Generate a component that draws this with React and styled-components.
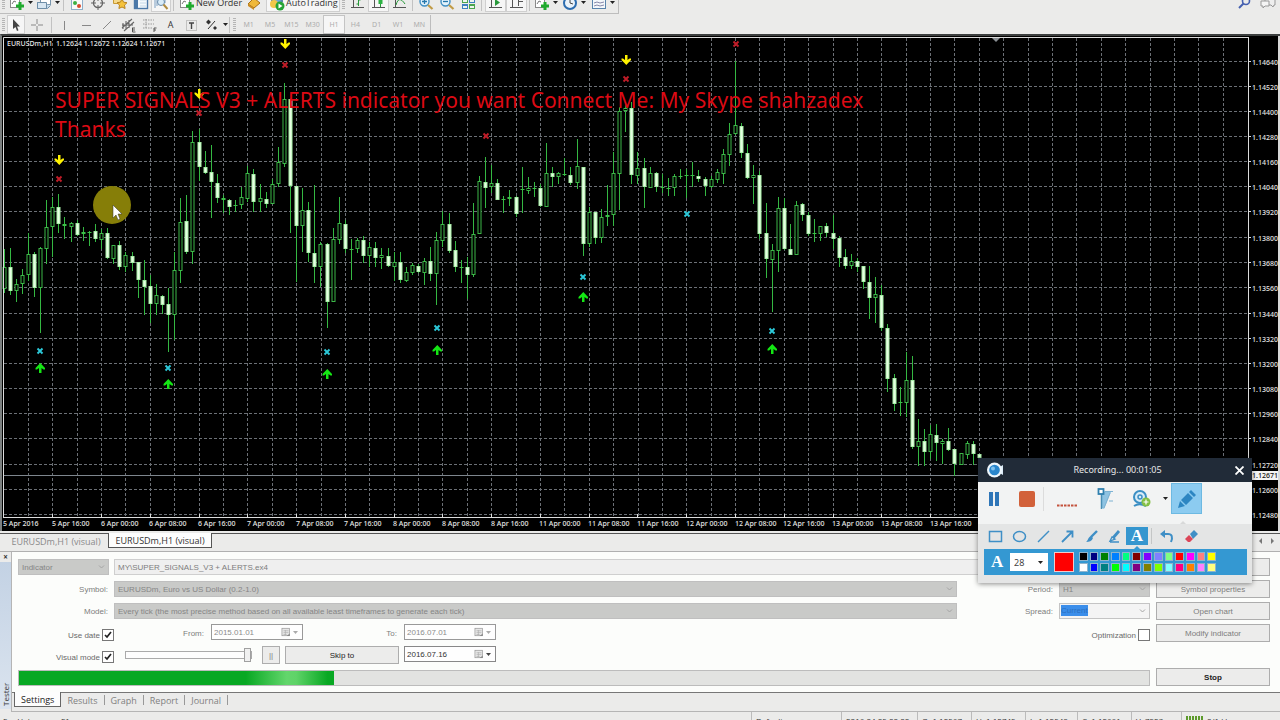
import React from 'react'
import styled, { createGlobalStyle } from 'styled-components'

const GlobalStyle = createGlobalStyle`
* {
    box-sizing: border-box;
}
body {
    margin: 0;
    overflow: hidden;
    background-color: #ebebea;
}
button, input, select {
    font: inherit;
    color: inherit;
    margin: 0;
    padding: 0;
    border-radius: 0;
}
`;

/* ---------- toolbars ---------- */

const Page = styled.div`
position: relative;
height: 100vh;
overflow: hidden;
display: flex;
flex-direction: column;
background-color: #ebebea;
font-family: 'Liberation Sans', sans-serif;
font-size: 8px;
color: #777;
`;
const ToolRow = styled.div`
display: flex;
align-items: center;
flex: none;
justify-content: space-between;
`;
const TopRow = styled(ToolRow)`
height: 22px;
margin-top: -8px;
`;
const LowerRow = styled(ToolRow)`
height: 20px;
padding-top: 1px;
`;
const Tools = styled.div`
display: flex;
align-items: center;
height: 100%;
border-right: 1px solid #bdbdbd;
border-bottom: ${p => (p.$line ? '1px solid #bdbdbd' : 'none')};
`;
const ToolButton = styled.button`
display: flex;
align-items: center;
justify-content: ${p => (p.$text ? 'flex-start' : 'center')};
gap: ${p => (p.$text ? 1 : 3)}px;
flex: none;
width: ${p => p.$w || 21}px;
height: 19px;
padding-left: ${p => (p.$text ? 2 : 0)}px;
border: 1px solid ${p => (p.$on ? '#cfcfcf' : 'transparent')};
background-color: ${p => (p.$on ? '#f6f6f6' : 'transparent')};
font-family: 'Open Sans', sans-serif;
font-size: 9px;
color: #333;
white-space: nowrap;
svg {
    flex: none;
}
`;
const Grip = styled.span`
flex: none;
width: 3px;
height: 14px;
margin: 0 2px;
background: repeating-linear-gradient(#b5b5b5 0 1px, transparent 1px 2px);
`;
const Separator = styled.span`
flex: none;
width: 1px;
height: 16px;
margin: 0 ${p => p.$m || 2}px;
background-color: #c2c2c2;
`;
const Periods = styled.div`
display: grid;
grid-template-columns: repeat(9, 1fr);
width: 192px;
height: 19px;
`;
const Period = styled.button`
border: 1px solid ${p => (p.$on ? '#c4c4c4' : 'transparent')};
background-color: ${p => (p.$on ? '#f6f6f6' : 'transparent')};
font-family: 'Noto Sans', sans-serif;
font-size: 7px;
color: #adadad;
`;
const RightTools = styled.div`
display: flex;
gap: 8px;
padding-right: 4px;
`;

/* ---------- chart ---------- */

const ChartFrame = styled.div`
position: relative;
display: flex;
flex: none;
height: 497px;
margin-bottom: 2px;
border-top: 2px solid #3c3f3f;
border-left: 2px solid #7c8080;
background-color: #000;
`;
const Plot = styled.svg`
flex: 1;
min-width: 0;
height: 495px;
overflow: hidden;
`;
const PriceScale = styled.svg`
flex: none;
width: 32px;
height: 495px;
border-right: 2px solid #d8d8d8;
`;
const AxisText = styled.text`
font-family: 'Noto Sans', sans-serif;
font-size: 7px;
font-weight: 500;
fill: ${p => (p.$dark ? '#111' : '#e6e6e6')};
`;
const Annotation = styled.p`
position: absolute;
left: 53px;
top: 50px;
margin: 0;
font-family: 'Noto Sans', sans-serif;
font-size: 21px;
line-height: 29px;
white-space: nowrap;
color: #dc0a14;
`;
const Pointer = styled.svg`
position: absolute;
left: 90px;
top: 149px;
`;

/* ---------- chart tabs ---------- */

const ChartTabs = styled.div`
display: flex;
justify-content: space-between;
flex: none;
height: 19px;
border-top: 1px solid #555;
border-bottom: 1px solid #b0b0b0;
font-family: 'Open Sans', sans-serif;
font-size: 9px;
`;
const TabGroup = styled.div`
display: flex;
align-items: flex-start;
padding-left: 4px;
`;
const ChartTab = styled.button`
height: 15px;
margin-top: -1px;
width: 104px;
border: ${p => (p.$on ? '1px solid #555' : 'none')};
border-top: ${p => (p.$on ? 'none' : '1px solid #555')};
background-color: ${p => (p.$on ? '#fdfdfd' : 'transparent')};
color: ${p => (p.$on ? '#333' : '#8a8a8a')};
`;
const TabArrows = styled.div`
display: flex;
gap: 9px;
padding: 4px 5px 0 0;
`;

/* ---------- tester ---------- */

const Tester = styled.section`
display: flex;
flex: none;
height: 160px;
`;
const SideBar = styled.div`
display: flex;
flex-direction: column;
align-items: center;
width: 12px;
border-right: 1px solid #b5b5b5;
font-family: 'Open Sans', sans-serif;
font-size: 8px;
color: #333;
`;
const CloseSmall = styled.button`
border: none;
background: none;
height: 10px;
line-height: 8px;
font-weight: bold;
`;
const SideTitle = styled.div`
flex: 1;
width: 11px;
line-height: 11px;
writing-mode: vertical-rl;
transform: rotate(180deg);
margin-bottom: 3px;
padding-top: 3px;
background: linear-gradient(#dbe4ef, #c3d2e4);
`;
const TesterBody = styled.div`
flex: 1;
min-width: 0;
`;
const Settings = styled.form`
display: grid;
grid-template-columns: 1fr 114px;
grid-auto-rows: 18px;
gap: 4px 6px;
height: 140px;
padding: 6px 10px 0 6px;
background-color: #fcfdfb;
`;
const Row = styled.div`
display: flex;
align-items: center;
min-width: 0;
`;
const Gap = styled.span`
flex: none;
width: 5px;
`;
const Label = styled.label`
flex: none;
width: ${p => p.$w || 90}px;
margin-right: 6px;
text-align: right;
white-space: nowrap;
color: #7d7d7d;
`;
const SelectBox = styled.div`
position: relative;
flex: ${p => (p.$w ? 'none' : '1')};
width: ${p => (p.$w ? p.$w + 'px' : 'auto')};
height: 16px;
svg {
    position: absolute;
    right: 4px;
    top: 5px;
}
`;
const Select = styled.select`
appearance: none;
width: 100%;
height: 16px;
padding-left: 3px;
border: 1px solid ${p => (p.$light ? '#c4c4c4' : '#bfbfbf')};
background-color: ${p => (p.$light ? '#f4f4f4' : '#c9cac8')};
color: #858585;
opacity: 1;
`;
const Selection = styled.span`
position: absolute;
left: 2px;
top: 2px;
width: 27px;
line-height: 11px;
background-color: #3b8eea;
color: #2a6fc0;
`;
const TextBox = styled.input`
flex: 1;
height: 16px;
padding-left: 3px;
border: 1px solid #cfcfcf;
background-color: #efefef;
color: #7d7d7d;
`;
const Side = styled.div`
display: flex;
align-items: center;
justify-content: flex-end;
flex: none;
width: 193px;
margin-left: ${p => (p.$push ? 'auto' : '0')};
`;
const CheckBox = styled.input`
appearance: none;
flex: none;
width: 12px;
height: 12px;
margin-top: 3px;
border: 1px solid #777;
background-color: #fff;
&:checked {
    background-image: url("data:image/svg+xml,%3Csvg xmlns='http://www.w3.org/2000/svg' viewBox='0 0 10 10'%3E%3Cpath d='M2 5l2 2 4-5' fill='none' stroke='%23222' stroke-width='1.7'/%3E%3C/svg%3E");
}
`;
const CheckLabel = styled(Label)`
width: 82px;
margin-right: 2px;
padding-top: 4px;
color: #6a6a6a;
`;
const DateLabel = styled(Label)`
margin-right: 7px;
`;
const DateField = styled.div`
display: flex;
align-items: center;
gap: 2px;
width: 92px;
height: 16px;
margin-bottom: 2px;
padding: 0 4px 0 2px;
border: 1px solid ${p => (p.$on ? '#888' : '#999')};
background-color: #fefefe;
color: ${p => (p.$on ? '#333' : '#8c8c8c')};
input {
    flex: 1;
    min-width: 0;
    border: none;
    background: none;
}
`;
const Slider = styled.input`
appearance: none;
width: 127px;
height: 16px;
margin: 0 10px 0 11px;
background: none;
&::-webkit-slider-runnable-track {
    height: 8px;
    border: 1px solid #aaa;
    background-color: #fdfdfd;
}
&::-webkit-slider-thumb {
    appearance: none;
    width: 7px;
    height: 14px;
    margin-top: -4px;
    border: 1px solid #a0a0a0;
    background-color: #f0f0f0;
}
`;
const Button = styled.button`
width: ${p => (p.$w ? p.$w + 'px' : 'auto')};
height: 18px;
border: 1px solid #adadad;
background-color: #ececeb;
font-weight: ${p => (p.$bold ? 'bold' : 'normal')};
color: ${p => (p.$on ? '#222' : '#7d7d7d')};
`;
const ProgressTrack = styled.div`
flex: 1;
height: 16px;
margin-top: 1px;
border: 1px solid #bcbcbc;
background-color: #e2e3e1;
`;
const ProgressFill = styled.div`
height: 14px;
background: linear-gradient(90deg, #08a823 0 72%, #63d66c 85%, #5fd368 88%, #08a823 98%);
`;
const TesterTabs = styled.div`
display: flex;
align-items: flex-start;
height: 20px;
padding-left: 2px;
border-top: 1px solid #777;
border-bottom: 1px solid #b5b5b5;
`;
const TesterTab = styled.button`
height: 15px;
margin-top: -1px;
padding: 0 6px;
border: ${p => (p.$on ? '1px solid #666' : 'none')};
border-top: ${p => (p.$on ? 'none' : '1px solid #777')};
background-color: ${p => (p.$on ? '#fdfdfd' : 'transparent')};
font-family: 'Open Sans', sans-serif;
font-size: 9px;
color: ${p => (p.$on ? '#222' : '#808080')};
`;
const TabLine = styled.span`
width: 1px;
height: 10px;
margin-top: 2px;
background-color: #999;
`;

/* ---------- status bar ---------- */

const StatusBar = styled.footer`
display: flex;
flex: none;
height: 20px;
font-family: 'Open Sans', sans-serif;
font-size: 8px;
line-height: 18px;
color: #333;
`;
const StatusCell = styled.span`
display: flex;
align-items: center;
gap: 4px;
width: ${p => p.$w}px;
height: 18px;
padding-left: 4px;
white-space: nowrap;
border-left: 1px solid #bbb;
`;
const StatusMain = styled.span`
flex: 1;
padding-left: 3px;
`;

/* ---------- recorder window ---------- */

const Recorder = styled.div`
position: absolute;
right: 28px;
top: 458px;
width: 274px;
padding-bottom: 8px;
background-color: #e4e5e5;
box-shadow: 0 1px 5px rgba(0, 0, 0, 0.45);
`;
const RecorderTitle = styled.div`
display: grid;
grid-template-columns: 20px 1fr 20px;
align-items: center;
height: 24px;
padding: 0 3px 0 8px;
background-color: #212b38;
font-family: 'Noto Sans', sans-serif;
font-size: 9px;
line-height: 22px;
color: #e8e8e8;
text-align: center;
`;
const CloseButton = styled.button`
display: flex;
justify-content: center;
border: none;
background: none;
`;
const RecorderMain = styled.div`
display: flex;
align-items: flex-start;
height: 42px;
padding-top: 1px;
background-color: #f2f3f3;
`;
const RecButton = styled.button`
display: flex;
align-items: center;
justify-content: center;
flex: none;
width: ${p => p.$w}px;
height: 31px;
border: ${p => (p.$on ? '1px solid #6db9e2' : 'none')};
background-color: ${p => (p.$on ? '#8ccbf0' : 'transparent')};
`;
const RecSplit = styled.span`
width: 1px;
height: 24px;
margin-top: 4px;
background-color: #dcdcdc;
`;
const RecSplitShort = styled.span`
width: 1px;
height: 16px;
margin: 0 1px 0 2px;
background-color: #c4c6c6;
`;
const RecorderTools = styled.div`
position: relative;
display: flex;
align-items: center;
height: 25px;
padding: 0 0 1px 6px;
`;
const DrawTool = styled.button`
display: flex;
align-items: center;
justify-content: center;
width: ${p => p.$w || 23}px;
height: 18px;
margin-right: 1px;
border: none;
background-color: ${p => (p.$on ? '#3596cf' : 'transparent')};
font-family: 'Liberation Serif', serif;
font-size: 17px;
line-height: 18px;
font-weight: bold;
color: #fff;
`;
const Notch = styled.span`
position: absolute;
left: ${p => p.$x}px;
bottom: ${p => p.$y || 0}px;
border: 3px solid transparent;
border-top: none;
border-bottom-color: ${p => p.$c};
`;
const TextBar = styled.div`
display: flex;
align-items: center;
height: 26px;
margin: 0 5px 0 6px;
padding-left: 7px;
background-color: #3498d2;
`;
const BigA = styled.span`
width: 19px;
font-family: 'Liberation Serif', serif;
font-size: 17px;
font-weight: bold;
color: #fff;
`;
const SizeBox = styled.div`
display: flex;
align-items: center;
width: 38px;
height: 18px;
padding: 0 3px 0 4px;
background-color: #fff;
color: #444;
input {
    width: 24px;
    border: none;
    font-family: 'Noto Sans', sans-serif;
    font-size: 9px;
}
`;
const CurrentColor = styled.span`
width: 20px;
height: 20px;
margin: 0 5px 0 6px;
border: 1px solid #f3c9c9;
background-color: #ff0000;
`;
const Palette = styled.div`
display: grid;
grid-template-columns: repeat(13, 1fr);
grid-auto-rows: 9px;
gap: 2px;
width: 137px;
`;
const Swatch = styled.button`
border: 1px solid #8fb4cc;
background-color: ${p => p.$c};
`;

/* high, body top, body bottom, low, 1 for a falling bar */
const CANDLES = [
  [249,267,289,293,0],[248,267,291,295,1],[279,284,291,302,0],[269,275,284,294,0],
  [233,254,275,281,0],[252,254,288,297,1],[247,248,288,333,0],[200,227,249,264,0],
  [197,207,227,257,0],[194,207,224,233,1],[217,224,226,239,1],[222,223,227,242,0],
  [220,223,235,236,1],[227,232,234,241,0],[231,232,232,246,0],[224,231,239,242,1],
  [229,233,240,249,0],[228,233,258,259,1],[245,245,259,264,0],[241,245,267,270,1],
  [252,255,267,272,0],[252,256,263,271,1],[262,262,280,298,1],[260,280,287,315,1],
  [275,286,304,323,1],[284,295,304,315,0],[295,296,305,314,1],[288,304,315,352,1],
  [252,270,315,340,0],[198,222,271,283,0],[195,221,252,254,1],[131,142,252,264,0],
  [129,142,167,181,1],[151,167,173,174,1],[145,172,182,218,1],[174,183,198,203,1],
  [195,198,200,213,1],[199,200,207,215,1],[200,205,206,212,0],[187,197,205,209,0],
  [166,173,199,202,0],[169,174,202,212,1],[184,198,202,212,0],[192,199,204,208,1],
  [179,184,204,204,0],[147,162,184,187,0],[83,99,164,167,0],[98,99,186,233,1],
  [186,186,226,282,1],[188,210,226,252,0],[202,210,253,262,1],[185,253,267,283,1],
  [242,244,267,287,0],[243,244,302,328,1],[228,239,302,302,0],[197,223,240,244,0],
  [220,224,249,253,1],[239,249,249,280,0],[238,240,249,253,0],[236,240,256,263,1],
  [242,247,256,267,0],[242,248,258,267,1],[248,255,258,269,0],[248,256,266,267,1],
  [252,262,267,281,0],[252,262,280,283,1],[267,272,281,282,0],[263,265,273,275,0],
  [264,266,272,273,1],[258,261,273,285,0],[247,261,274,281,1],[232,240,274,305,0],
  [211,224,241,247,0],[213,224,251,253,1],[241,250,267,272,1],[260,267,268,283,0],
  [257,267,275,299,1],[203,234,275,277,0],[176,181,234,234,0],[157,182,188,208,1],
  [165,183,187,193,0],[179,183,200,200,1],[196,199,199,213,0],[190,197,199,206,0],
  [196,197,214,217,1],[167,189,189,213,0],[177,188,191,194,0],[182,188,188,197,0],
  [184,188,206,207,1],[143,173,207,207,0],[167,173,177,187,1],[172,173,177,184,0],
  [158,174,175,176,1],[167,175,183,185,1],[139,166,183,189,0],[167,167,244,256,1],
  [207,212,244,247,0],[212,212,238,244,1],[209,217,238,243,0],[185,215,217,226,0],
  [152,173,215,226,0],[107,111,174,210,0],[102,108,111,132,0],[102,108,175,184,1],
  [152,168,176,184,0],[158,168,187,208,1],[167,173,188,188,0],[172,173,187,192,1],
  [174,187,187,193,0],[178,188,188,196,0],[174,176,188,196,0],[169,176,177,179,0],
  [169,175,176,198,0],[162,175,176,187,0],[170,176,179,182,1],[177,179,186,196,1],
  [176,179,187,188,0],[169,172,180,183,0],[149,154,174,184,0],[123,134,155,166,0],
  [61,125,134,135,0],[123,126,153,158,1],[144,153,178,179,1],[165,175,178,204,0],
  [171,175,234,239,1],[203,233,259,278,1],[244,250,260,312,0],[197,208,251,272,0],
  [198,208,249,250,1],[224,249,255,255,1],[201,205,255,255,0],[203,204,215,221,1],
  [212,215,234,236,1],[219,233,234,242,0],[226,226,234,241,0],[223,226,233,237,1],
  [215,233,239,249,1],[236,238,258,267,1],[249,257,266,269,1],[254,261,266,269,0],
  [258,261,267,272,1],[266,266,282,289,1],[266,282,298,319,1],[277,294,298,323,0],
  [285,295,328,331,1],[324,328,379,392,1],[374,378,404,411,1],[387,402,403,416,0],
  [352,380,403,417,0],[356,380,447,449,1],[419,441,447,466,0],[429,441,452,466,1],
  [425,434,452,459,0],[424,435,443,461,1],[439,441,444,464,0],[428,441,450,451,1],
  [449,449,464,476,1],[453,453,465,465,0],[441,443,455,459,0],[441,444,454,465,1],
  [454,454,458,470,1],
];

const MARKS = {
  sell: [[59,160],[199,94],[285,44],[626,60]],
  buy: [[40,368],[168,384],[327,374],[437,350],[583,297],[772,349]],
  top: [[59,179],[199,113],[285,65],[486,136],[626,79],[736,44]],
  bottom: [[40,351],[168,368],[327,352],[437,328],[583,277],[687,214],[772,331]],
};

const GRID_Y = [62, 87, 112, 137, 162, 187, 212, 238, 263, 288, 314, 339, 364, 389, 414, 439, 465, 490, 515];
const TIMES = [
  '5 Apr 2016', '5 Apr 16:00', '6 Apr 00:00', '6 Apr 08:00', '6 Apr 16:00', '7 Apr 00:00', '7 Apr 08:00',
  '7 Apr 16:00', '8 Apr 00:00', '8 Apr 08:00', '8 Apr 16:00', '11 Apr 00:00', '11 Apr 08:00', '11 Apr 16:00',
  '12 Apr 00:00', '12 Apr 08:00', '12 Apr 16:00', '13 Apr 00:00', '13 Apr 08:00', '13 Apr 16:00',
];
const BAR_STEP = 6.096;
const barX = i => Math.floor(4 + i * BAR_STEP);

function Candle({ x, data }) {
  const [high, top, bottom, low, down] = data;
  const h = Math.max(bottom - top, 1);
  return (
    <g>
      <rect x={x} y={high} width="1" height={Math.max(low - high, 1)} fill="#34b842" />
      {h < 3
        ? <rect x={x - 1.5} y={top} width="4" height={h} fill="#3cc048" />
        : <rect x={x - 1} y={top + 0.5} width="3" height={h - 1} fill={down ? '#e6ffe2' : '#000'} stroke={down ? '#a8f0a8' : '#3cb848'} />}
    </g>
  );
}

function Arrow({ x, y, color, up }) {
  return (
    <path
      d="M-1 -5h2.500v5l2 -1.500h1.500v1.500L0.300 5L-4.500 0v-1.500h1.500l2 1.500z"
      fill={color}
      transform={`translate(${x} ${y}) ${up ? 'scale(1 -1)' : ''}`}
    />
  );
}

function Cross({ x, y, color }) {
  return <path d={`M${x - 2.5} ${y - 2.5}l5 5m0 -5l-5 5`} stroke={color} strokeWidth="1.9" fill="none" />;
}

function Chart() {
  return (
    <ChartFrame>
      <Plot>
        {/* drawn in page coordinates, the frame starts at 2,36 */}
        <g transform="translate(-2 -36)">
          <g stroke="#6c7076" strokeDasharray="3 2" shapeRendering="crispEdges">
            {Array.from({ length: 50 }, (_, i) => {
              const x = Math.floor(28.4 + i * BAR_STEP * 4) + 0.5;
              return <line key={i} x1={x} x2={x} y1="38" y2="517" />;
            })}
            {GRID_Y.map(y => <line key={y} x1="4" x2="110%" y1={y - 0.5} y2={y - 0.5} />)}
          </g>
          <line x1="4" x2="110%" y1="475.5" y2="475.5" stroke="#7e868e" />
          {CANDLES.map((c, i) => <Candle key={i} x={barX(i)} data={c} />)}
          {MARKS.sell.map(([x, y]) => <Arrow key={x} x={x} y={y} color="#fff200" />)}
          {MARKS.buy.map(([x, y]) => <Arrow key={x} x={x} y={y} color="#14e614" up />)}
          {MARKS.top.map(([x, y]) => <Cross key={x} x={x} y={y} color="#c01c28" />)}
          {MARKS.bottom.map(([x, y]) => <Cross key={x} x={x} y={y} color="#2cc8d8" />)}
          <path d="M992 38h8l-4 4z" fill="#8a8f94" />
          <path d="M3.5 518V37.5H4000M3 517.5H4000" fill="none" stroke="#dcdcdc" />
          {TIMES.map((t, i) => (
            <g key={t}>
              {i > 0 && <rect x={Math.floor(4 + i * 8 * BAR_STEP)} y="514" width="1" height="4" fill="#ddd" />}
              <AxisText x={Math.round(3 + i * 8 * BAR_STEP)} y="526">{t}</AxisText>
            </g>
          ))}
          <AxisText x="7" y="46">EURUSDm,H1&#160; 1.12624 1.12672 1.12624 1.12671</AxisText>
        </g>
      </Plot>
      <PriceScale>
        <g transform="translate(0 -36)">
          <rect x="0" y="37" width="1" height="481" fill="#dcdcdc" />
          {GRID_Y.map((y, i) => (
            <g key={y}>
              <rect x="1" y={y - 1} width="2" height="1" fill="#ddd" />
              <AxisText x="4" y={y + 3}>{(1.1464 - i * 0.0012).toFixed(5)}</AxisText>
            </g>
          ))}
          <rect x="3" y="471" width="28" height="9" fill="#f4f4f4" />
          <AxisText x="4" y="478" $dark>1.12671</AxisText>
        </g>
      </PriceScale>
      <Annotation>
        SUPER SIGNALS V3 + ALERTS indicator you want Connect Me: My Skype shahzadex<br />Thanks
      </Annotation>
      <Pointer width="40" height="40" viewBox="0 0 40 40">
        <circle cx="20" cy="20" r="19" fill="#867e08" />
        <path d="M21 20v13l3-3 2 5 2-1-2-5h4z" fill="#fff" stroke="#333" strokeWidth="0.5" />
      </Pointer>
    </ChartFrame>
  );
}

/* ---------- icons ---------- */

const Svg = ({ children, s = 16 }) => (
  <svg width={s} height={s} viewBox="0 0 16 16" fill="none" aria-hidden="true">{children}</svg>
);
const Plus = ({ x = 10, y = 10 }) => (
  <path d={`M${x - 4} ${y}h8M${x} ${y - 4}v8`} stroke="#1faa2d" strokeWidth="3" />
);
const Caret = ({ c = '#222' }) => (
  <svg width="5" height="3" viewBox="0 0 5 3" aria-hidden="true"><path d="M0 0h5L2.5 3z" fill={c} /></svg>
);
const Chevron = () => (
  <svg width="7" height="6" viewBox="0 0 7 6" fill="none" aria-hidden="true"><path d="M1 1.5l2.5 2.5L6 1.5" stroke="#a5a5a5" /></svg>
);
const NewChart = () => <Svg><rect x="1.5" y="1.5" width="9" height="11" fill="#fff" stroke="#8a8a8a" /><path d="M3 9l2-3 2 1" stroke="#777" /><Plus x={11} y={11} /></Svg>;
const Profiles = () => <Svg><rect x="4.5" y="2.5" width="10" height="7" fill="#fff" stroke="#7a96ad" /><path d="M1.5 7v6.500h10l3-3" fill="#c5dcee" stroke="#6e8ea8" /><path d="M1.5 7.5h9v6h-9z" fill="#d7e6f2" stroke="#6e8ea8" /></Svg>;
const Market = () => <Svg><rect x="2.5" y="0.5" width="11" height="14" fill="#fafafa" stroke="#8fb0ca" /><circle cx="6" cy="8" r="2" fill="#3cb043" /><circle cx="10" cy="11" r="2" fill="#d9482b" /></Svg>;
const Target = () => <Svg><circle cx="8" cy="8" r="4.5" stroke="#666" strokeWidth="1.4" /><path d="M8 1v5M8 10v5M1 8h5M10 8h5" stroke="#666" /></Svg>;
const Star = () => <Svg><path d="M1.5 2.5h9v6h-9z" fill="#f5d98a" stroke="#c89a35" /><path d="M10 4l1.6 3.2 3.4.5-2.5 2.4.6 3.4L10 12l-3.1 1.5.6-3.4L5 7.700l3.4-.5z" fill="#f5c23b" stroke="#b98420" /></Svg>;
const Terminal = () => <Svg><rect x="1.5" y="1.5" width="13" height="12" fill="#f3f8fc" stroke="#4b78a8" strokeWidth="1.4" /><path d="M2 2h3v11H2z" fill="#4b78a8" /><path d="M7 5h6M7 8h6M7 11h6" stroke="#b9cfe2" strokeWidth=".8" /></Svg>;
const TesterIcon = () => <Svg><path d="M2 13V2M4 3v8M12 3v5" stroke="#7a9fc2" /><circle cx="8" cy="7" r="3.5" fill="#d9ecf8" stroke="#6b8cab" /><path d="M10.5 9.500l4 4.500" stroke="#b08c40" strokeWidth="2" /></Svg>;
const Gold = () => <Svg><path d="M2 9l6-6 6 5-6 5z" fill="#efb83a" stroke="#a6701b" /><path d="M2 9l6 4v2L2 11z" fill="#c98a20" /></Svg>;
const Auto = () => <Svg><path d="M2 6l6-3 6 3-5 3z" fill="#6ea6d6" stroke="#45739c" /><circle cx="5" cy="9" r="4" fill="#f0c64a" /><circle cx="11" cy="11" r="4.5" fill="#25a436" /><path d="M9.5 8.500v5l4-2.500z" fill="#fff" /></Svg>;
const Bars = ({ kind }) => (
  <Svg>
    <path d="M3.5 1v12M1 12.5h13" stroke="#555" />
    {kind === 'bar' && <path d="M8.5 3v8M6.5 9h2M8.5 5h2" stroke="#27993a" />}
    {kind === 'candle' && <><path d="M9.5 1v11" stroke="#27993a" /><rect x="7.5" y="3" width="4" height="6" fill="#2eb344" /></>}
    {kind === 'line' && <path d="M4 10c2-7 5-7 9-1" stroke="#27993a" />}
    {kind === 'scroll' && <path d="M7 4l5 3.500L7 11z" fill="#27993a" />}
    {kind === 'shift' && <path d="M9.5 2v9M14 6.5h-4" stroke="#555" />}
  </Svg>
);
const Zoom = ({ plus }) => <Svg><circle cx="6.5" cy="6.5" r="4.5" fill="#e3f2fb" stroke="#3f8fc4" strokeWidth="1.4" /><path d={plus ? 'M4 6.5h5M6.5 4v5' : 'M4 6.5h5'} stroke="#2577ac" strokeWidth="1.3" /><path d="M10 10l4.500 4" stroke="#c19b45" strokeWidth="2.2" /></Svg>;
const Tiles = () => <Svg><path d="M2 2h6v6H2z" fill="#4aa54e" /><path d="M9 2h6v6H9z" fill="#3f7fc0" /><path d="M2 9h6v5H2z" fill="#3f7fc0" /><path d="M9 9h6v5H9z" fill="#4aa54e" /><path d="M3 5h4v2H3zM10 5h4v2h-4zM3 11h4v2H3zM10 11h4v2h-4z" fill="#eef5ee" /></Svg>;
const Clock = () => <Svg><circle cx="8" cy="8" r="6" fill="#e9f2fa" stroke="#2d6db0" strokeWidth="2" /><path d="M8 4.5V8l3 1" stroke="#444" /></Svg>;
const Template = () => <Svg><rect x="1.5" y="2.5" width="13" height="11" fill="#f4f8fb" stroke="#5a84ac" /><path d="M2 4h12" stroke="#5a84ac" strokeWidth="2" /><path d="M3 8l3-1 3 1 4-1M3 11l3-1 3 1 4-1" stroke="#88a" /></Svg>;
const Search = () => <Svg><circle cx="10" cy="6" r="3.5" stroke="#4560b0" strokeWidth="1.6" /><path d="M7.5 8.500L3 13" stroke="#4560b0" strokeWidth="2" /></Svg>;
const Chat = () => <Svg><path d="M5 4h10v6h-1l-1 2-2-2H5z" fill="#eee" stroke="#999" /><path d="M1 6h8v5H5l-2 2v-2H1z" fill="#f5f5f5" stroke="#999" /></Svg>;
const Channel = () => <Svg><path d="M2 11L12 2M4 14L14 5M3 6v6M6 4v8M9 3v8M2 8h11" stroke="#666" strokeWidth="1.1" /><path d="M12 11h3M12 13h3M12.5 11v4h3" stroke="#333" strokeWidth=".8" /></Svg>;
const Fibo = () => <Svg><path d="M2 3h11M2 7h11M2 11h9M5 2v10" stroke="#999" strokeDasharray="1.5 1" /><path d="M13 15v-4h2.500M13 13h2" stroke="#444" strokeWidth=".9" /></Svg>;
const Shapes = () => <Svg><path d="M2 5l2.500-2.500L7 5 4.500 7.500zM9 11l2-2 2 2-2 2z" fill="#333" /><path d="M4 12l7-8" stroke="#333" /></Svg>;
const Calendar = () => <Svg s={10}><rect x="1.5" y="2" width="12" height="12" fill="#e6e6e6" stroke="#8c8c8c" /><path d="M4 6h8M4 9h8M4 12h5M7 5v8" stroke="#aaa" /><path d="M9 14.5l5-4v4z" fill="#888" /></Svg>;
const BLUE = '#3f8fc6';
const DrawSvg = ({ children }) => <svg width="15" height="15" viewBox="0 0 15 15" fill="none" stroke={BLUE} aria-hidden="true">{children}</svg>;

function Toolbars() {
  return (
    <>
      <TopRow>
        <Tools $line>
          <Grip />
          <ToolButton $w={28} aria-label="New chart"><NewChart /><Caret /></ToolButton>
          <ToolButton $w={26} aria-label="Profiles"><Profiles /><Caret /></ToolButton>
          <Separator />
          <ToolButton aria-label="Market watch"><Market /></ToolButton>
          <ToolButton $w={22} aria-label="Data window"><Target /></ToolButton>
          <ToolButton aria-label="Navigator"><Star /></ToolButton>
          <ToolButton aria-label="Terminal"><Terminal /></ToolButton>
          <ToolButton $w={20} $on aria-label="Strategy tester"><TesterIcon /></ToolButton>
          <Separator />
          <ToolButton $w={66} $text><NewChart />New Order</ToolButton>
          <ToolButton $w={24} aria-label="MetaEditor"><Gold /></ToolButton>
          <ToolButton $w={74} $text $on><Auto />AutoTrading</ToolButton>
          <Grip />
          <ToolButton aria-label="Bar chart"><Bars kind="bar" /></ToolButton>
          <ToolButton $on aria-label="Candlesticks"><Bars kind="candle" /></ToolButton>
          <ToolButton aria-label="Line chart"><Bars kind="line" /></ToolButton>
          <Separator />
          <ToolButton aria-label="Zoom in"><Zoom plus /></ToolButton>
          <ToolButton aria-label="Zoom out"><Zoom /></ToolButton>
          <ToolButton aria-label="Tile windows"><Tiles /></ToolButton>
          <Separator $m={3} />
          <ToolButton $on aria-label="Auto scroll"><Bars kind="scroll" /></ToolButton>
          <ToolButton $on aria-label="Chart shift"><Bars kind="shift" /></ToolButton>
          <Separator />
          <ToolButton $w={28} aria-label="Indicators"><NewChart /><Caret /></ToolButton>
          <ToolButton $w={28} aria-label="Periods"><Clock /><Caret /></ToolButton>
          <ToolButton $w={30} aria-label="Templates"><Template /><Caret /></ToolButton>
        </Tools>
        <RightTools><Search /><Chat /></RightTools>
      </TopRow>
      <LowerRow>
        <Tools>
          <Grip />
          <ToolButton $w={18} $on aria-label="Cursor"><Svg><path d="M5 2v10l2.500-2 1.500 4 1.500-.7L9 9.500h3z" fill="#444" /></Svg></ToolButton>
          <ToolButton $w={24} aria-label="Crosshair"><Svg><path d="M8 2v5M8 9v5M2 8h5M9 8h5" stroke="#888" /></Svg></ToolButton>
          <Separator />
          <ToolButton aria-label="Vertical line"><Svg><path d="M7.5 4v9" stroke="#888" /></Svg></ToolButton>
          <ToolButton aria-label="Horizontal line"><Svg><path d="M4 8.5h9" stroke="#888" /></Svg></ToolButton>
          <ToolButton aria-label="Trendline"><Svg><path d="M4 12l8-8" stroke="#888" /></Svg></ToolButton>
          <ToolButton aria-label="Equidistant channel"><Channel /></ToolButton>
          <ToolButton $w={22} aria-label="Fibonacci retracement"><Fibo /></ToolButton>
          <ToolButton>A</ToolButton>
          <ToolButton $w={22} aria-label="Text label"><Svg><rect x="2.5" y="3.5" width="10" height="10" stroke="#999" strokeDasharray="1 1" /><path d="M5 6h5M7.5 6v6" stroke="#444" strokeWidth="1.4" /></Svg></ToolButton>
          <ToolButton $w={25} aria-label="Arrows"><Shapes /><Caret /></ToolButton>
          <Separator $m={1} />
          <Grip />
          <Periods>
            {['M1', 'M5', 'M15', 'M30', 'H1', 'H4', 'D1', 'W1', 'MN'].map(p => <Period key={p} $on={p === 'H1'}>{p}</Period>)}
          </Periods>
        </Tools>
      </LowerRow>
    </>
  );
}

function ChartTabsBar() {
  return (
    <ChartTabs>
      <TabGroup>
        <ChartTab>EURUSDm,H1 (visual)</ChartTab>
        <ChartTab $on>EURUSDm,H1 (visual)</ChartTab>
      </TabGroup>
      <TabArrows>
        <svg width="4" height="6"><path d="M4 0v6L1 3z" fill="#777" /></svg>
        <svg width="4" height="6"><path d="M0 0v6l3-3z" fill="#777" /></svg>
      </TabArrows>
    </ChartTabs>
  );
}

function DateBox({ id, value, on, label }) {
  return (
    <DateField $on={on}>
      <input id={id} defaultValue={value} disabled={!on} aria-label={label} />
      <Calendar />
      <Caret c={on ? '#444' : '#aaa'} />
    </DateField>
  );
}

function TesterPanel() {
  const done = 0.279;
  return (
    <Tester>
      <SideBar>
        <CloseSmall aria-label="Close tester">×</CloseSmall>
        <SideTitle>Tester</SideTitle>
      </SideBar>
      <TesterBody>
        <Settings onSubmit={e => e.preventDefault()}>
          <Row>
            <SelectBox $w={91}>
              <Select disabled aria-label="Program type"><option>Indicator</option></Select>
              <Chevron />
            </SelectBox>
            <Gap />
            <TextBox disabled aria-label="Program" defaultValue="MY\SUPER_SIGNALS_V3 + ALERTS.ex4" />
          </Row>
          <Button disabled aria-label="Indicator properties" />
          <Row>
            <Label htmlFor="symbol">Symbol:</Label>
            <SelectBox>
              <Select id="symbol" disabled><option>EURUSDm, Euro vs US Dollar (0.2-1.0)</option></Select>
              <Chevron />
            </SelectBox>
            <Side>
              <Label htmlFor="period">Period:</Label>
              <SelectBox $w={91}><Select id="period" disabled><option>H1</option></Select><Chevron /></SelectBox>
            </Side>
          </Row>
          <Button disabled>Symbol properties</Button>
          <Row>
            <Label htmlFor="model">Model:</Label>
            <SelectBox>
              <Select id="model" disabled><option>Every tick (the most precise method based on all available least timeframes to generate each tick)</option></Select>
              <Chevron />
            </SelectBox>
            <Side>
              <Label htmlFor="spread">Spread:</Label>
              <SelectBox $w={91}>
                <Select id="spread" disabled $light><option></option></Select>
                <Selection>Current</Selection>
                <Chevron />
              </SelectBox>
            </Side>
          </Row>
          <Button disabled>Open chart</Button>
          <Row>
            <CheckLabel htmlFor="usedate">Use date</CheckLabel>
            <CheckBox type="checkbox" id="usedate" defaultChecked />
            <DateLabel $w={90} htmlFor="from">From:</DateLabel>
            <DateBox id="from" value="2015.01.01" />
            <DateLabel $w={94} htmlFor="to">To:</DateLabel>
            <DateBox id="to" value="2016.07.01" />
            <Side $push>
              <CheckLabel htmlFor="optimization">Optimization</CheckLabel>
              <CheckBox type="checkbox" id="optimization" />
            </Side>
          </Row>
          <Button disabled>Modify indicator</Button>
          <Row>
            <CheckLabel htmlFor="visual">Visual mode</CheckLabel>
            <CheckBox type="checkbox" id="visual" defaultChecked />
            <Slider type="range" min="0" max="32" defaultValue="32" aria-label="Speed" />
            <Button $w={18}>||</Button>
            <Gap />
            <Button $w={114} $on>Skip to</Button>
            <Gap />
            <DateBox value="2016.07.16" on label="Skip to date" />
          </Row>
          <span />
          <Row>
            <ProgressTrack role="progressbar" aria-valuenow={Math.round(done * 100)}>
              <ProgressFill style={{ width: `${done * 100}%` }} />
            </ProgressTrack>
          </Row>
          <Button $on $bold>Stop</Button>
        </Settings>
        <TesterTabs>
          <TesterTab $on>Settings</TesterTab>
          {['Results', 'Graph', 'Report', 'Journal'].map(t => (
            <React.Fragment key={t}>
              <TesterTab>{t}</TesterTab>
              <TabLine />
            </React.Fragment>
          ))}
        </TesterTabs>
      </TesterBody>
    </Tester>
  );
}

const COLORS = [
  '#000', '#000080', '#008000', '#0080ff', '#00ff80', '#800000', '#8000ff', '#8080ff', '#80ff80', '#f00', '#f0f', '#ff8080', '#ff0',
  '#fff', '#00f', '#008080', '#0f0', '#0ff', '#800080', '#808000', '#80ff00', '#80ffff', '#ff0080', '#ff8000', '#ff80ff', '#ffff80',
];

function RecorderWindow() {
  return (
    <Recorder>
      <RecorderTitle>
        <svg width="18" height="18" viewBox="0 0 18 18">
          <path d="M12 7l5-3v10l-5-3z" fill="#dcecf8" />
          <circle cx="8.5" cy="9" r="7.5" fill="#eef6fc" />
          <circle cx="8.5" cy="9" r="5.3" fill="#2a86cc" />
          <circle cx="7" cy="7.5" r="2" fill="#7fc1ee" />
        </svg>
        Recording... 00:01:05
        <CloseButton aria-label="Close">
          <svg width="9" height="9" viewBox="0 0 9 9"><path d="M0.5 0.5l8 8M8.5 0.5l-8 8" stroke="#fff" strokeWidth="1.8" /></svg>
        </CloseButton>
      </RecorderTitle>
      <RecorderMain>
        <RecButton $w={32} aria-label="Pause">
          <svg width="12" height="16"><path d="M1 1h4v14H1zM7 1h4v14H7z" fill="#2f76b8" /></svg>
        </RecButton>
        <RecButton $w={33} aria-label="Stop">
          <svg width="16" height="16"><rect width="16" height="16" rx="2" fill="#d2613a" /></svg>
        </RecButton>
        <RecSplit />
        <RecButton $w={45} aria-label="Time limit">
          <svg width="20" height="16"><path d="M0 14.5h20" stroke="#c4523c" strokeWidth="2" strokeDasharray="2.5 1" /></svg>
        </RecButton>
        <RecButton $w={33} aria-label="Pen">
          <svg width="18" height="24" viewBox="0 0 18 24" fill="none">
            <path d="M5 5h9L7 22 5 21z" fill="#8fc3e2" />
            <path d="M4.5 7v15" stroke="#4a8fb5" strokeWidth="1.5" />
            <rect x="1.5" y="2" width="5" height="5" fill="#fff" stroke="#2f7fae" strokeWidth="1.8" />
            <path d="M7 4.5h9M12 14h4M13 6L7 21" stroke="#7eb2d2" />
          </svg>
        </RecButton>
        <RecButton $w={38} aria-label="Webcam">
          <svg width="19" height="20" viewBox="0 0 19 20" fill="none">
            <circle cx="8" cy="8" r="6" fill="#d8ebf7" stroke="#3b8fc4" strokeWidth="2" />
            <circle cx="8" cy="8" r="2" stroke="#3b8fc4" strokeWidth="1.5" />
            <path d="M2 17c3-2 8-2 12 0" stroke="#3b8fc4" strokeWidth="2" />
            <circle cx="14" cy="13" r="4.5" fill="#84bf44" />
            <path d="M11.5 13h5M14 10.5v5" stroke="#fff" strokeWidth="1.2" />
          </svg>
        </RecButton>
        <RecButton $w={11} aria-label="Webcam options"><Caret /></RecButton>
        <RecButton $w={31} $on aria-label="Draw">
          <svg width="20" height="20" viewBox="0 0 20 20"><path d="M1 19l2-7 5 5zM4 11l7-7 5 5-7 7zM12 3l2-2 5 5-2 2z" fill="#2d86c2" /></svg>
        </RecButton>
      </RecorderMain>
      <RecorderTools>
        <Notch $x={202} $y={25} $c="#d8d9d9" />
        <DrawTool aria-label="Rectangle"><DrawSvg><rect x="1.5" y="2.5" width="12" height="10" strokeWidth="1.5" /></DrawSvg></DrawTool>
        <DrawTool aria-label="Ellipse"><DrawSvg><ellipse cx="7.5" cy="7.5" rx="6" ry="5" strokeWidth="1.5" /></DrawSvg></DrawTool>
        <DrawTool aria-label="Line"><DrawSvg><path d="M2 13L13 2" strokeWidth="1.4" /></DrawSvg></DrawTool>
        <DrawTool aria-label="Arrow"><DrawSvg><path d="M2 13L12 3M6.5 2.5h6v6" strokeWidth="1.8" /></DrawSvg></DrawTool>
        <DrawTool aria-label="Brush"><DrawSvg><path d="M13 2L7 8" strokeWidth="2.4" /><path d="M7 7l2 2c-1 3-4 4-7 4 2-1 2-5 5-6z" fill={BLUE} stroke="none" /></DrawSvg></DrawTool>
        <DrawTool $w={21} aria-label="Highlighter"><DrawSvg><path d="M12 2L6 9" strokeWidth="2.8" /><path d="M3 13h9M3 12l2-4 3 2z" strokeWidth="1.3" /></DrawSvg></DrawTool>
        <DrawTool $w={22} $on>A</DrawTool>
        <RecSplitShort />
        <DrawTool $w={26} aria-label="Undo"><DrawSvg><path d="M3 5h6c4 0 5 3 3 8" strokeWidth="2" /><path d="M1 5l5-4v8z" fill={BLUE} stroke="none" /></DrawSvg></DrawTool>
        <DrawTool aria-label="Eraser"><DrawSvg><path d="M6 5l4-4 4 4-5 5z" fill={BLUE} stroke="none" /><path d="M5 6l4 4-3 3H4l-3-3z" fill="#dc4658" stroke="none" /></DrawSvg></DrawTool>
        <Notch $x={156} $c="#3498d2" />
      </RecorderTools>
      <TextBar>
        <BigA>A</BigA>
        <SizeBox><input defaultValue="28" aria-label="Font size" /><Caret /></SizeBox>
        <CurrentColor />
        <Palette>
          {COLORS.map(c => <Swatch key={c} $c={c} aria-label={c} />)}
        </Palette>
      </TextBar>
    </Recorder>
  );
}

export default function App() {
  return (
    <Page>
      <GlobalStyle />
      <Toolbars />
      <Chart />
      <ChartTabsBar />
      <TesterPanel />
      <StatusBar>
        <StatusMain>For Help, press F1</StatusMain>
        <StatusCell $w={90}>Default</StatusCell>
        <StatusCell $w={76}>2016.04.05 00:00</StatusCell>
        <StatusCell $w={54}>O: 1.12567</StatusCell>
        <StatusCell $w={54}>H: 1.12745</StatusCell>
        <StatusCell $w={52}>L: 1.12548</StatusCell>
        <StatusCell $w={54}>C: 1.12661</StatusCell>
        <StatusCell $w={50}>V: 7523</StatusCell>
        <StatusCell $w={99}>
          <svg width="17" height="10"><path d="M0 5h17" stroke="#5d9a2c" strokeWidth="10" strokeDasharray="2 1" /></svg>
          0/1 kb
        </StatusCell>
      </StatusBar>
      <RecorderWindow />
    </Page>
  );
}
